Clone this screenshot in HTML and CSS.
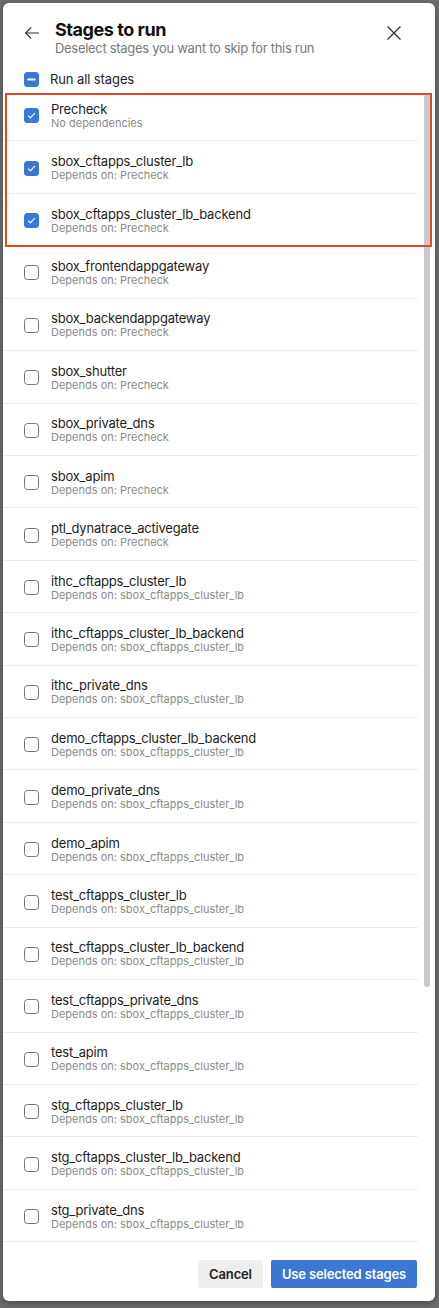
FILE: index.html
```html
<!DOCTYPE html>
<html lang="en">
<head>
<meta charset="utf-8">
<title>Stages to run</title>
<link rel="stylesheet" href="styles.css">
</head>
<body>
<div class="dialog">
  <div class="header">
    <button class="icon-btn back" aria-label="Back">
      <svg width="16" height="16" viewBox="0 0 16 16"><path d="M15 8H1.6M7.2 2.4L1.6 8l5.6 5.6" fill="none" stroke="#2b2b2b" stroke-width="1.15"/></svg>
    </button>
    <div class="titles">
      <h1 class="title">Stages to run</h1>
      <div class="subtitle">Deselect stages you want to skip for this run</div>
    </div>
    <button class="icon-btn close" aria-label="Close">
      <svg width="16" height="16" viewBox="0 0 16 16"><path d="M1.5 1.5l13 13M14.5 1.5l-13 13" fill="none" stroke="#2b2b2b" stroke-width="1.15"/></svg>
    </button>
  </div>

  <div class="run-all">
    <span class="cb cb-on"><svg width="15" height="15" viewBox="0 0 15 15"><path d="M4.3 7.5h6.4" stroke="#fff" stroke-width="2.2" stroke-linecap="round"/></svg></span>
    <span class="run-all-label">Run all stages</span>
  </div>

  <div class="list-wrap">
    <div class="list">
      <div class="row"><span class="cb cb-on"><svg width="15" height="15" viewBox="0 0 15 15"><path d="M4.2 7.6l2.2 2.2 4.4-4.6" fill="none" stroke="#fff" stroke-width="1.2"/></svg></span><div class="txt"><div class="name">Precheck</div><div class="dep">No dependencies</div></div></div>
      <div class="row"><span class="cb cb-on"><svg width="15" height="15" viewBox="0 0 15 15"><path d="M4.2 7.6l2.2 2.2 4.4-4.6" fill="none" stroke="#fff" stroke-width="1.2"/></svg></span><div class="txt"><div class="name">sbox_cftapps_cluster_lb</div><div class="dep">Depends on: Precheck</div></div></div>
      <div class="row"><span class="cb cb-on"><svg width="15" height="15" viewBox="0 0 15 15"><path d="M4.2 7.6l2.2 2.2 4.4-4.6" fill="none" stroke="#fff" stroke-width="1.2"/></svg></span><div class="txt"><div class="name">sbox_cftapps_cluster_lb_backend</div><div class="dep">Depends on: Precheck</div></div></div>
      <div class="row"><span class="cb"></span><div class="txt"><div class="name">sbox_frontendappgateway</div><div class="dep">Depends on: Precheck</div></div></div>
      <div class="row"><span class="cb"></span><div class="txt"><div class="name">sbox_backendappgateway</div><div class="dep">Depends on: Precheck</div></div></div>
      <div class="row"><span class="cb"></span><div class="txt"><div class="name">sbox_shutter</div><div class="dep">Depends on: Precheck</div></div></div>
      <div class="row"><span class="cb"></span><div class="txt"><div class="name">sbox_private_dns</div><div class="dep">Depends on: Precheck</div></div></div>
      <div class="row"><span class="cb"></span><div class="txt"><div class="name">sbox_apim</div><div class="dep">Depends on: Precheck</div></div></div>
      <div class="row"><span class="cb"></span><div class="txt"><div class="name">ptl_dynatrace_activegate</div><div class="dep">Depends on: Precheck</div></div></div>
      <div class="row"><span class="cb"></span><div class="txt"><div class="name">ithc_cftapps_cluster_lb</div><div class="dep">Depends on: sbox_cftapps_cluster_lb</div></div></div>
      <div class="row"><span class="cb"></span><div class="txt"><div class="name">ithc_cftapps_cluster_lb_backend</div><div class="dep">Depends on: sbox_cftapps_cluster_lb</div></div></div>
      <div class="row"><span class="cb"></span><div class="txt"><div class="name">ithc_private_dns</div><div class="dep">Depends on: sbox_cftapps_cluster_lb</div></div></div>
      <div class="row"><span class="cb"></span><div class="txt"><div class="name">demo_cftapps_cluster_lb_backend</div><div class="dep">Depends on: sbox_cftapps_cluster_lb</div></div></div>
      <div class="row"><span class="cb"></span><div class="txt"><div class="name">demo_private_dns</div><div class="dep">Depends on: sbox_cftapps_cluster_lb</div></div></div>
      <div class="row"><span class="cb"></span><div class="txt"><div class="name">demo_apim</div><div class="dep">Depends on: sbox_cftapps_cluster_lb</div></div></div>
      <div class="row"><span class="cb"></span><div class="txt"><div class="name">test_cftapps_cluster_lb</div><div class="dep">Depends on: sbox_cftapps_cluster_lb</div></div></div>
      <div class="row"><span class="cb"></span><div class="txt"><div class="name">test_cftapps_cluster_lb_backend</div><div class="dep">Depends on: sbox_cftapps_cluster_lb</div></div></div>
      <div class="row"><span class="cb"></span><div class="txt"><div class="name">test_cftapps_private_dns</div><div class="dep">Depends on: sbox_cftapps_cluster_lb</div></div></div>
      <div class="row"><span class="cb"></span><div class="txt"><div class="name">test_apim</div><div class="dep">Depends on: sbox_cftapps_cluster_lb</div></div></div>
      <div class="row"><span class="cb"></span><div class="txt"><div class="name">stg_cftapps_cluster_lb</div><div class="dep">Depends on: sbox_cftapps_cluster_lb</div></div></div>
      <div class="row"><span class="cb"></span><div class="txt"><div class="name">stg_cftapps_cluster_lb_backend</div><div class="dep">Depends on: sbox_cftapps_cluster_lb</div></div></div>
      <div class="row"><span class="cb"></span><div class="txt"><div class="name">stg_private_dns</div><div class="dep">Depends on: sbox_cftapps_cluster_lb</div></div></div>
    </div>
    <div class="scroll-thumb"></div>
  </div>

  <div class="footer">
    <button class="btn btn-secondary">Cancel</button>
    <button class="btn btn-primary">Use selected stages</button>
  </div>

  <div class="highlight"></div>
</div>
</body>
</html>
```

FILE: styles.css
```css
* { box-sizing: border-box; }

html, body {
  margin: 0;
  padding: 0;
}

body {
  background: #6e6e6e;
  width: 439px;
  height: 1308px;
  overflow: hidden;
  font-family: Inter, "Noto Sans", "Liberation Sans", sans-serif;
  color: #1e1e1e;
}

.dialog {
  position: relative;
  margin: 3px 0 0 3px;
  width: 432px;
  background: #fff;
  border-radius: 6px;
  box-shadow: 0 2px 8px rgba(0, 0, 0, 0.35);
  display: flex;
  flex-direction: column;
}

.header {
  display: flex;
  align-items: flex-start;
  padding: 16px 33px 0 21px;
  height: 52px;
}

.icon-btn {
  border: 0;
  background: none;
  padding: 0;
  width: 16px;
  height: 16px;
  display: flex;
  flex: none;
  cursor: pointer;
}

.back { margin-top: 6px; }
.close { margin-top: 6px; margin-left: auto; }

.titles {
  margin-left: 15px;
}

.title {
  margin: 0;
  font-size: 18px;
  line-height: 21px;
  font-weight: 700;
  letter-spacing: -0.45px;
  color: #111;
}

.subtitle {
  font-size: 13px;
  line-height: 16px;
  letter-spacing: -0.3px;
  color: #7a7a7a;
}

.run-all {
  display: flex;
  align-items: center;
  gap: 11px;
  height: 20px;
  margin-top: 14px;
  padding-left: 21px;
}

.run-all-label {
  font-size: 13px;
  letter-spacing: -0.1px;
  color: #1e1e1e;
}

.cb {
  flex: none;
  width: 15px;
  height: 15px;
  border: 1px solid #757575;
  border-radius: 3.5px;
  background: #fff;
  display: flex;
  align-items: center;
  justify-content: center;
}

.cb-on {
  border: 0;
  background: #3b78d5;
}

.list-wrap {
  position: relative;
  height: 1153px;
}

.list {
  height: 100%;
  width: 428px;
  overflow: hidden;
}

.scroll-thumb {
  position: absolute;
  right: 5px;
  top: 5px;
  width: 6px;
  height: 893px;
  background: #c9c9c9;
  border-radius: 3px;
}

.row {
  display: flex;
  align-items: center;
  gap: 12px;
  height: 52.43px;
  padding: 2px 0 0 21px;
  margin-right: 13px;
  border-bottom: 1px solid #ececec;
}

.txt {
  display: flex;
  flex-direction: column;
}

.name {
  font-size: 13px;
  line-height: 15px;
  letter-spacing: -0.2px;
  color: #1e1e1e;
}

.dep {
  font-size: 11px;
  line-height: 13px;
  color: #8b8b8b;
}

.footer {
  display: flex;
  justify-content: flex-end;
  gap: 8px;
  padding: 18px 18px 13px;
}

.btn {
  height: 28px;
  border: 0;
  border-radius: 2px;
  font-family: inherit;
  font-size: 13px;
  font-weight: 600;
  letter-spacing: -0.15px;
  padding: 0;
  white-space: nowrap;
  cursor: pointer;
}

.btn-secondary {
  width: 65px;
  background: #efefef;
  color: #222;
}

.btn-primary {
  width: 146px;
  background: #3b78d5;
  color: #fff;
}

.highlight {
  position: absolute;
  left: 2px;
  top: 90px;
  width: 427px;
  height: 154px;
  border: 2px solid #e8461f;
  pointer-events: none;
}
```
